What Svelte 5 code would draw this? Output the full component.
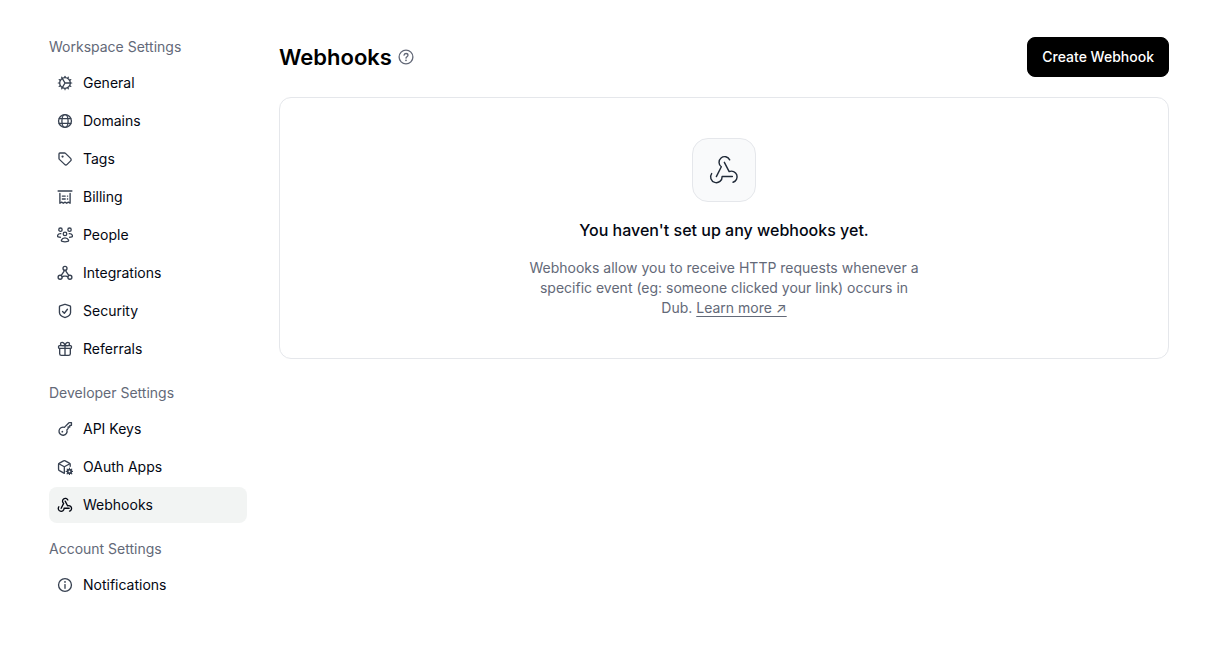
<script>
  const groups = [
    { title: 'Workspace Settings', items: ['General', 'Domains', 'Tags', 'Billing', 'People', 'Integrations', 'Security', 'Referrals'] },
    { title: 'Developer Settings', items: ['API Keys', 'OAuth Apps', 'Webhooks'] },
    { title: 'Account Settings', items: ['Notifications'] }
  ];
  const active = 'Webhooks';
  const teeth = Array.from({ length: 12 }, (_, i) => i * 30);
  const cogTeeth = Array.from({ length: 8 }, (_, i) => i * 45);
</script>

{#snippet webhook()}
  <path d="M12.2 3.3A3.15 3.15 0 1 0 7.5 7.2L4.7 12.7" />
  <path d="M9.2 4.7l2.7 5.2a3.2 3.2 0 1 1 2.2 6" />
  <path d="M13.7 12.7H7.95a3.25 3.25 0 1 1-5.9-1.7" />
{/snippet}

{#snippet icon(name)}
  <svg class="icon" viewBox="0 0 18 18" aria-hidden="true">
    {#if name === 'General'}
      <circle cx="9" cy="9" r="6" />
      {#each teeth as a}
        <path d="M9 2.6V1.4" stroke-width="1.3" transform="rotate({a} 9 9)" />
      {/each}
      <path d="M9 9h5.5M9 9L6.1 4M9 9l-2.900 5" />
    {:else if name === 'Domains'}
      <circle cx="9" cy="9" r="7.25" />
      <ellipse cx="9" cy="9" rx="3.5" ry="7.25" />
      <path d="M2.5 6.25h13M2.5 11.75h13" />
    {:else if name === 'Tags'}
      <path d="M3.25 2.25h5.25c.4 0 .78.16 1.06.44l5.75 5.6c.78.78.78 2.05 0 2.83l-3.93 3.92c-.78.78-2.04.78-2.82 0l-5.87-5.6A1.5 1.5 0 0 1 2.25 8.4V3.25a1 1 0 0 1 1-1z" />
      <circle cx="6.25" cy="6.25" r="1.25" class="solid" />
    {:else if name === 'Billing'}
      <path d="M1.25 2.25h15.5" />
      <path d="M3.25 5v11l2-1.25L7.1 16 9 14.75 10.9 16l1.85-1.25 2 1.25V5" />
      <path d="M6 8h3.25M6 11.25h3.25M11.75 8h.25M11.75 11.25h.25" />
    {:else if name === 'People'}
      <circle cx="9" cy="7.75" r="2" />
      <circle cx="3.9" cy="3" r="1.9" />
      <circle cx="14.1" cy="3" r="1.9" />
      <path d="M9 12.25c-2 0-3.4 1-4 2.4-.3.8.2 1.4.9 1.6 2 .6 4.2.6 6.2 0 .7-.2 1.2-.8.9-1.6-.6-1.4-2-2.4-4-2.4z" />
      <path d="M4.25 7.5C2.6 7.4 1.2 8.3.6 9.6c-.3.7 0 1.3.7 1.5.8.3 1.6.4 2.500.4M13.75 7.500c1.650-.100 3.050.800 3.650 2.100.3.700 0 1.300-.7 1.500-.8.300-1.600.400-2.500.400" />
    {:else if name === 'Integrations'}
      <circle cx="9" cy="3.75" r="2.25" />
      <circle cx="3.5" cy="13.75" r="2.25" />
      <circle cx="14.5" cy="13.75" r="2.25" />
      <path d="M7.9 5.75v1.5L4.75 11.75M10.1 5.75v1.5l3.15 4.5M5.75 13.25l2-.75h2.5l2 .75" />
    {:else if name === 'Security'}
      <path d="M9.3 1.6l5.25 1.7c.4.15.7.5.7.95v6.5c0 3-4.35 5-5.75 5.45a1.5 1.5 0 0 1-1 0C7.1 15.75 2.75 13.75 2.75 10.75v-6.5c0-.45.3-.8.7-.95L8.7 1.6a1 1 0 0 1 .6 0z" />
      <path d="M6.25 9.5l2 2 3.500-4.500" />
    {:else if name === 'Referrals'}
      <rect x="1.75" y="5.25" width="14.5" height="3" rx="1" />
      <path d="M3 8.5v5.75a2 2 0 0 0 2 2h8a2 2 0 0 0 2-2V8.5M9 5.25v11M9 5.25C8.5 3 7.3 1.6 5.75 1.6a1.8 1.8 0 0 0 0 3.65H9zM9 5.25c.5-2.25 1.7-3.65 3.25-3.65a1.8 1.8 0 0 1 0 3.65H9z" />
    {:else if name === 'API Keys'}
      <path d="M16.25 1.75h-2.1a1 1 0 0 0-.7.3L8.3 7.2a4.55 4.55 0 1 0 2.8 2.8l1.4-1.4V6.750h1.900V4.900h1.850z" />
      <circle cx="6" cy="12" r="1" class="solid" />
    {:else if name === 'OAuth Apps'}
      <path d="M8.250 15.900a2 2 0 0 1-.9-.250l-4.600-2.500a2 2 0 0 1-1-1.750V6.300a2 2 0 0 1 1-1.750l4.600-2.500a2 2 0 0 1 1.900 0l4.600 2.500a2 2 0 0 1 1 1.750v1.900" />
      <path d="M2.100 5.300L8.250 8.750l6.200-3.450M8.250 8.750v7" />
      <circle cx="14" cy="14" r="2" stroke-width="2" />
      {#each cogTeeth as a}
        <path d="M14 11.250V10.300" stroke-width="1.3" transform="rotate({a} 14 14)" />
      {/each}
    {:else if name === 'Webhooks'}
      {@render webhook()}
    {:else}
      <circle cx="9" cy="9" r="7.25" />
      <path d="M9 12.75V8.5" />
      <circle cx="9" cy="5.5" r="1" class="solid" />
    {/if}
  </svg>
{/snippet}

<div class="page">
  <nav aria-label="Settings">
    {#each groups as group}
      <section>
        <h2>{group.title}</h2>
        <div class="links">
          {#each group.items as item}
            <a href="#{item.toLowerCase().replace(' ', '-')}" class:active={item === active} aria-current={item === active ? 'page' : undefined}>
              {@render icon(item)}
              <span>{item}</span>
            </a>
          {/each}
        </div>
      </section>
    {/each}
  </nav>

  <main>
    <header>
      <div class="title">
        <h1>Webhooks</h1>
        <button class="help" aria-label="Help">
          <svg class="icon" viewBox="0 0 18 18" aria-hidden="true">
            <circle cx="9" cy="9" r="7.75" />
            <path d="M6.8 6.9C7.1 5.8 7.9 5.1 9.05 5.1c1.25 0 2.15.75 2.150 1.900 0 1.750-2 1.600-2.200 3.200" />
            <circle cx="9" cy="12.7" r="1" class="solid" />
          </svg>
        </button>
      </div>
      <button class="create">Create Webhook</button>
    </header>

    <div class="card">
      <div class="tile">
        <svg viewBox="0 0 18 18" aria-hidden="true">{@render webhook()}</svg>
      </div>
      <h3>You haven't set up any webhooks yet.</h3>
      <p>
        Webhooks allow you to receive HTTP requests whenever a specific event (eg: someone clicked your link) occurs in Dub.
        <a href="#learn-more">Learn more ↗</a>
      </p>
    </div>
  </main>
</div>

<style>
  :global(body) {
    background: #fff;
  }
  .page {
    display: grid;
    grid-template-columns: 198px minmax(0, 1fr);
    gap: 32px;
    padding: 37px 53px 37px 49px;
    font-family: Inter, sans-serif;
    font-size: 14px;
    line-height: 20px;
    color: #030712;
  }
  h1, h2, h3, p {
    margin: 0;
  }
  nav {
    display: flex;
    flex-direction: column;
    gap: 16px;
  }
  h2 {
    margin-bottom: 8px;
    font-size: 14px;
    font-weight: 400;
    color: #636978;
  }
  .links {
    display: flex;
    flex-direction: column;
    gap: 2px;
  }
  .links a {
    display: flex;
    align-items: center;
    gap: 10px;
    padding: 8px;
    border-radius: 8px;
    color: inherit;
    text-decoration: none;
  }
  .links a.active {
    background: #f2f4f3;
  }
  svg {
    display: block;
    fill: none;
    stroke: currentColor;
    stroke-linecap: round;
    stroke-linejoin: round;
  }
  .icon {
    width: 16px;
    height: 16px;
    stroke-width: 1.5;
  }
  .links .icon {
    color: #374151;
  }
  .links .active .icon {
    color: #030712;
  }
  .solid {
    fill: currentColor;
    stroke: none;
  }
  header {
    display: flex;
    align-items: center;
    justify-content: space-between;
    margin-bottom: 20px;
  }
  .title {
    display: flex;
    align-items: center;
    gap: 6px;
  }
  h1 {
    font-size: 22px;
    line-height: 32px;
    font-weight: 600;
    color: #000;
  }
  button {
    font: inherit;
    cursor: pointer;
  }
  .help {
    padding: 0;
    border: 0;
    background: none;
    color: #636978;
  }
  .create {
    height: 40px;
    padding: 0 14px;
    border: 1px solid #000;
    border-radius: 8px;
    background: #000;
    color: #fff;
    font-weight: 500;
  }
  .card {
    display: flex;
    flex-direction: column;
    align-items: center;
    padding: 40px;
    border: 1px solid #e5e7eb;
    border-radius: 12px;
    text-align: center;
  }
  .tile {
    display: grid;
    place-items: center;
    box-sizing: border-box;
    width: 64px;
    height: 64px;
    border: 1px solid #e5e7eb;
    border-radius: 16px;
    background: #f9fafb;
  }
  .tile svg {
    width: 32px;
    height: 32px;
    stroke-width: 0.8;
    color: #1f2937;
  }
  h3 {
    margin: 16px 0;
    font-size: 16px;
    line-height: 24px;
    font-weight: 500;
  }
  p {
    max-width: 394px;
    color: #636978;
  }
  p a {
    color: inherit;
    text-underline-offset: 3px;
  }
</style>
